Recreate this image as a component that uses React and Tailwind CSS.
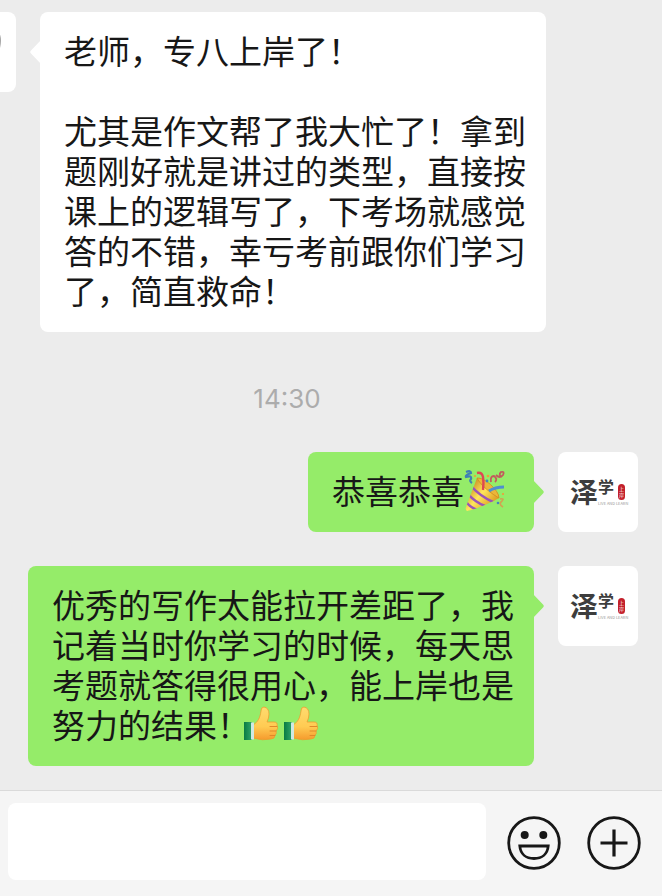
import { useState } from "react";

const MESSAGES = [
  {
    id: 1,
    from: "student",
    text: "老师，专八上岸了！\n\n尤其是作文帮了我大忙了！拿到题刚好就是讲过的类型，直接按课上的逻辑写了，下考场就感觉答的不错，幸亏考前跟你们学习了，简直救命！",
  },
  { id: 2, from: "time", text: "14:30" },
  { id: 3, from: "teacher", text: "恭喜恭喜", emoji: ["party"] },
  {
    id: 4,
    from: "teacher",
    text: "优秀的写作太能拉开差距了，我记着当时你学习的时候，每天思考题就答得很用心，能上岸也是努力的结果！",
    emoji: ["thumb", "thumb"],
  },
];

function PartyEmoji() {
  return (
    <svg
      role="img"
      aria-label="🎉"
      viewBox="0 -1 42 42"
      className="inline-block h-[42px] w-[42px] align-middle"
    >
      <defs>
        <linearGradient id="cone" x1="0.15" y1="0.3" x2="0.75" y2="0.8">
          <stop offset="0" stopColor="#c98a22" />
          <stop offset="0.45" stopColor="#ffe75c" />
          <stop offset="1" stopColor="#d8921c" />
        </linearGradient>
        <clipPath id="coneShape">
          <path d="M13 7C20 6 35 19 35 27C29 31 10 39 3 40Q1 39 2 36Z" />
        </clipPath>
      </defs>
      <g clipPath="url(#coneShape)">
        <path d="M0 0H42V42H0Z" fill="url(#cone)" />
        <path
          d="M8 16Q16 25 29 31M5 24Q11 31 21 35M2 31Q6 36 13 39"
          fill="none"
          stroke="#9a55b8"
          strokeWidth="2.6"
        />
      </g>
      <path
        d="M13 7C20 6 35 19 35 27C28 23 17 15 13 7Z"
        fill="#eab63a"
        stroke="#cf8a20"
        strokeWidth="0.8"
      />
      <path
        d="M19 19Q20 12 19 6Q18 1 13 2"
        fill="none"
        stroke="#df4753"
        strokeWidth="2.4"
      />
      <path
        d="M25 20Q31 16 40 16"
        fill="none"
        stroke="#4f8ecf"
        strokeWidth="3"
      />
      <path
        d="M2 1Q7 -1 7 2Q1 4 2 6Q8 4 7 8Q5 10 8 12"
        fill="none"
        stroke="#3f7fb5"
        strokeWidth="2.2"
      />
      <path
        d="M27 11Q26 5 30 5Q34 8 31 11M32 4Q36 8 39 4Q41 0 37 1Q34 4 38 6"
        fill="none"
        stroke="#c25b5c"
        strokeWidth="1.8"
      />
      <path
        d="M36 28Q41 27 38 30Q34 33 39 36"
        fill="none"
        stroke="#d3a350"
        strokeWidth="1.6"
      />
      <g fill="#f29b38">
        <circle cx="24" cy="5" r="1.3" />
        <circle cx="11" cy="5" r="1.1" />
        <circle cx="39" cy="23" r="1.1" />
      </g>
      <g fill="#4187bd">
        <circle cx="23" cy="10" r="1.4" />
        <circle cx="34" cy="32" r="1.3" />
      </g>
    </svg>
  );
}

function ThumbEmoji() {
  return (
    <svg
      role="img"
      aria-label="👍"
      viewBox="1 -1 40 40"
      className="inline-block h-10 w-10 align-middle"
    >
      <defs>
        <linearGradient id="skin" x1="0" y1="0" x2="0" y2="1">
          <stop offset="0" stopColor="#ffdb70" />
          <stop offset="0.6" stopColor="#ffcb52" />
          <stop offset="1" stopColor="#f59a2d" />
        </linearGradient>
        <linearGradient id="sleeve" x1="0" y1="0" x2="1" y2="0">
          <stop offset="0" stopColor="#087b43" />
          <stop offset="1" stopColor="#31a56a" />
        </linearGradient>
      </defs>
      <path
        d="M12 20C17 17 19 13 20 6Q20 2 23 2Q28 3 28 9Q28 13 26 17H33Q37 17 36 21Q38 23 35 26Q36 29 34 30Q34 34 30 34Q22 36 12 33Z"
        fill="url(#skin)"
        stroke="#ee9d2e"
        strokeWidth="0.8"
      />
      <path
        d="M29 21.5H36M29 26H35M29 30.5H34"
        fill="none"
        stroke="#e2872a"
        strokeWidth="1"
        strokeLinecap="round"
      />
      <path d="M3 17H11V35H3Z" fill="url(#sleeve)" />
      <path d="M10 17.5H13V34.5H10Z" fill="#cfe9e4" />
    </svg>
  );
}

function SchoolAvatar() {
  return (
    <div className="flex h-20 w-20 shrink-0 items-start rounded-lg bg-white pt-6 pl-3 text-[#3d3d3d]">
      <span className="text-[28px] leading-[30px] font-bold">泽</span>
      <div className="flex flex-col">
        <div className="flex h-6 items-start">
          <span className="text-[16px] leading-5 font-bold">学</span>
          <span className="mt-2 ml-1 flex h-4 w-[7px] flex-col items-center justify-center rounded-sm bg-[#c3202b] text-[5px] leading-[6px] text-white">
            <span>上</span>
            <span>岸</span>
          </span>
        </div>
        <span className="text-[4px] leading-[6px] whitespace-nowrap text-[#999]">
          LIVE AND LEARN
        </span>
      </div>
    </div>
  );
}

function StudentAvatar() {
  return (
    <div className="-ml-16 flex h-20 w-20 shrink-0 items-start rounded-lg bg-white">
      <svg viewBox="0 0 80 80" className="h-20 w-20">
        <path d="M60 14Q67 24 64 36Q62 40 58 42Z" fill="#9b9b9b" />
      </svg>
    </div>
  );
}

function Bubble({ mine, children }) {
  return (
    <div
      className={
        mine
          ? "relative max-w-[506px] rounded-lg bg-[#95ec69] pt-[18px] pr-5 pb-[22px] pl-6"
          : "relative max-w-[506px] rounded-lg bg-white pt-[18px] pr-5 pb-[22px] pl-6"
      }
    >
      <svg
        viewBox="0 0 11 24"
        className={
          mine
            ? "absolute top-7 -right-[10px] h-6 w-[11px] text-[#95ec69]"
            : "absolute top-7 -left-[10px] h-6 w-[11px] rotate-180 text-white"
        }
      >
        <path d="M0 0L10 10.5Q11.5 12 10 13.5L0 24Z" fill="currentColor" />
      </svg>
      <p className="text-[33px] leading-10 whitespace-pre-wrap text-[#171717]">
        {children}
      </p>
    </div>
  );
}

function Message({ message }) {
  if (message.from === "time") {
    return (
      <time className="mt-[47px] mb-[34px] pr-[88px] text-center font-[Inter,sans-serif] text-[26px] leading-[39px] text-[#acacac]">
        {message.text}
      </time>
    );
  }

  if (message.from === "student") {
    return (
      <div className="flex items-start gap-6">
        <StudentAvatar />
        <Bubble>{message.text}</Bubble>
      </div>
    );
  }

  return (
    <div className="mb-[34px] flex items-start justify-end gap-6 pr-6 last:mb-6">
      <Bubble mine>
        {message.text}
        {message.emoji[0] === "party" ? (
          <span className="mr-2 inline-flex h-10 items-start align-top">
            <PartyEmoji />
          </span>
        ) : (
          <span className="-ml-2 inline-flex h-10 items-start align-top">
            {message.emoji.map((name, i) => (
              <ThumbEmoji key={name + i} />
            ))}
          </span>
        )}
      </Bubble>
      <SchoolAvatar />
    </div>
  );
}

function App() {
  const [draft, setDraft] = useState("");

  return (
    <div
      lang="zh-CN"
      className="flex min-h-screen flex-col overflow-x-hidden bg-[#ececec] font-['Noto_Sans_CJK_SC',sans-serif]"
    >
      <main className="flex flex-1 flex-col pt-3">
        {MESSAGES.map((message) => (
          <Message key={message.id} message={message} />
        ))}
      </main>

      <footer className="flex items-start gap-[21px] border-t border-[#dadada] bg-[#f5f5f5] pt-3 pr-[21px] pb-4 pl-2">
        <input
          type="text"
          aria-label="输入消息"
          value={draft}
          onChange={(e) => setDraft(e.target.value)}
          className="h-[77px] min-w-0 flex-1 rounded-lg bg-white px-5 text-[33px] text-[#171717] outline-none"
        />
        <div className="flex h-20 items-center gap-[26px]">
          <button type="button" aria-label="表情">
            <svg
              viewBox="0 0 54 54"
              className="h-[54px] w-[54px]"
              fill="none"
              stroke="#171717"
              strokeWidth="2.8"
            >
              <circle cx="27" cy="27" r="25.3" />
              <circle cx="17.7" cy="19" r="4" fill="#171717" stroke="none" />
              <circle cx="36.3" cy="19" r="4" fill="#171717" stroke="none" />
              <path d="M12.8 30H41.2C40.5 38 35 42.5 27 42.5S13.5 38 12.8 30Z" />
            </svg>
          </button>
          <button type="button" aria-label="更多">
            <svg
              viewBox="0 0 54 54"
              className="h-[54px] w-[54px]"
              fill="none"
              stroke="#171717"
              strokeWidth="2.8"
            >
              <circle cx="27" cy="27" r="25.3" />
              <path d="M27 13.5V40.5M13.5 27H40.5" strokeWidth="3.2" />
            </svg>
          </button>
        </div>
      </footer>
    </div>
  );
}

export default App;
